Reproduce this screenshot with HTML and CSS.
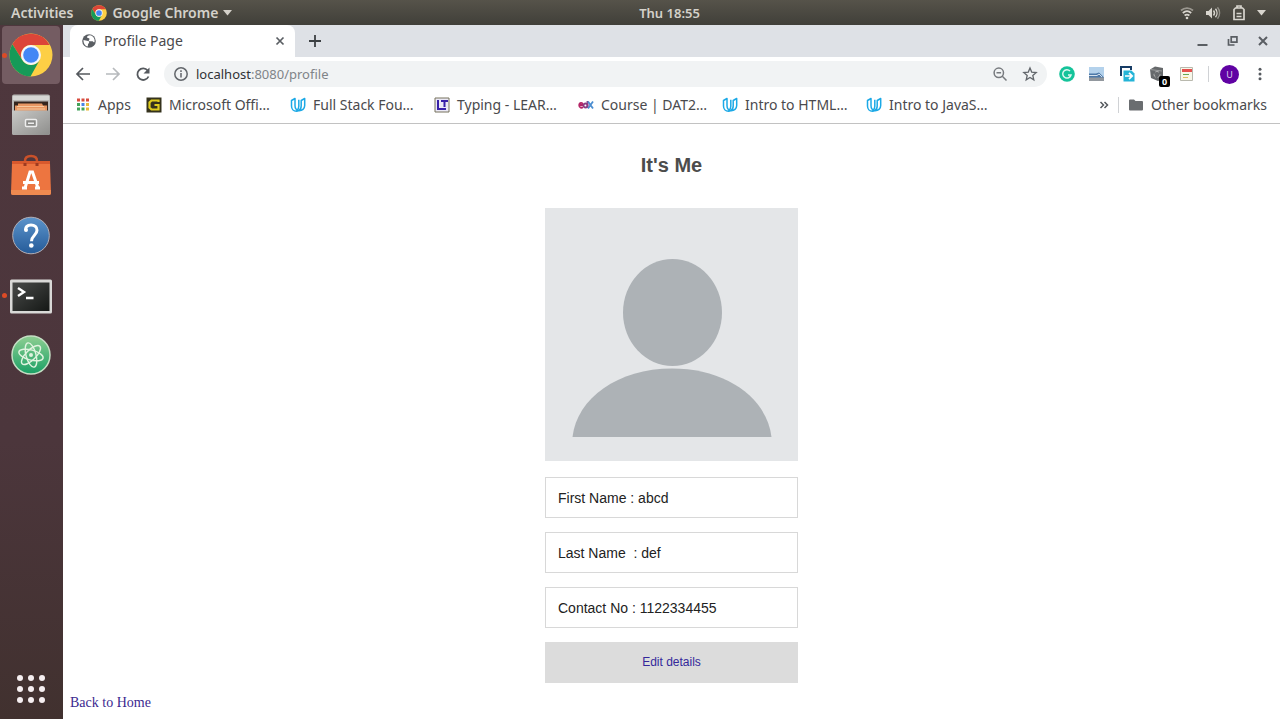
FILE: index.html
```
<!DOCTYPE html>
<html lang="en">
<head>
<meta charset="utf-8">
<meta name="viewport" content="width=device-width, initial-scale=1">
<title>Profile Page</title>
<link rel="stylesheet" href="styles.css">
</head>
<body class="desktop">
<svg class="defs" aria-hidden="true">
  <defs>
    <symbol id="chrome" viewBox="0 0 44 44">
      <circle cx="22" cy="22" r="21.5" fill="#fdcf45"/>
      <path d="M22 12h18.7A21.5 21.5 0 0 0 3.4 11.2L13.3 27A10 10 0 0 1 22 12z" fill="#dc4538"/>
      <path d="M3.4 11.2A21.5 21.5 0 0 0 21.5 43.5L30.7 27A10 10 0 0 1 13.3 27z" fill="#169a58"/>
      <circle cx="22" cy="22" r="10" fill="#f4f6fb"/>
      <circle cx="22" cy="22" r="7.8" fill="#4387f5"/>
    </symbol>
    <symbol id="udacity" viewBox="0 0 16 16">
      <path d="M5 1.5 1.500 3.500V9c0 3 2 5.300 5 5.300 1 0 1.600-.2 2.200-.6C6.500 13 5 11 5 8.400zM8.800 2.800v6.400c0 1.700-.6 3-1.800 3.900M14.700 1.500 11.200 3.500v5.600c0 2-.9 3.800-2.500 4.600 3.500.2 6-1.900 6-5.100z" fill="none" stroke="#1ca9e6" stroke-width="1.500" stroke-linejoin="round"/>
    </symbol>
  </defs>
</svg>

<header class="topbar">
  <div class="topbar-left">
    <button class="top-btn">Activities</button>
    <button class="top-btn"><svg class="i16"><use href="#chrome"/></svg>Google Chrome<svg class="caret" viewBox="0 0 9 6"><path d="M0 0h9L4.500 5.500z" fill="currentColor"/></svg></button>
  </div>
  <time class="clock">Thu 18:55</time>
  <div class="topbar-right">
    <svg class="i16" viewBox="0 0 16 16" fill="none" stroke="#d8d5ce" stroke-width="1.700"><path d="M2 5.500C5.500 2.300 10.500 2.300 14 5.500" opacity=".55"/><path d="M3.800 8c2.500-2.200 5.900-2.200 8.400 0M5.600 10.500c1.500-1.200 3.300-1.200 4.800 0"/><circle cx="8" cy="13" r="1.300" fill="#d8d5ce" stroke="none"/></svg>
    <svg class="i16" viewBox="0 0 16 16" fill="none" stroke="#d8d5ce" stroke-width="1.400"><path d="M1 6h2.500L7 2.500v11L3.500 10H1z" fill="#d8d5ce" stroke="none"/><path d="M8.500 5.500c1.200 1.500 1.200 3.500 0 5M10.500 3.800c2 2.400 2 6 0 8.400"/><path d="M12.500 2.200c2.800 3.400 2.800 8.200 0 11.600" opacity=".5"/></svg>
    <svg class="i16" viewBox="0 0 16 16" fill="none" stroke="#d8d5ce" stroke-width="1.700"><path d="M6 2.500V1h4v1.500M3 4.500 4.500 3h7L13 4.500v10H3zM5.500 8.500h5M5.500 11.500h5"/></svg>
    <svg class="caret" viewBox="0 0 9 6"><path d="M0 0h9L4.500 5.500z" fill="#d8d5ce"/></svg>
  </div>
</header>

<div class="workspace">
  <nav class="dock" aria-label="Dock">
    <button class="dock-item active running" aria-label="Google Chrome"><svg class="i44"><use href="#chrome"/></svg></button>
    <button class="dock-item" aria-label="Files"><svg class="i44" viewBox="0 0 44 44">
      <defs><linearGradient id="cab" x1="0" y1="0" x2="1" y2="1"><stop offset="0" stop-color="#c8c8c6"/><stop offset="1" stop-color="#8e8e8c"/></linearGradient></defs>
      <path d="M3 3.500Q3 1.500 5 1.500h34q2 0 2 2V40q0 2-2 2H5q-2 0-2-2z" fill="#b9b9b7"/><path d="M4 3h36v4H4z" fill="#d6d6d4"/>
      <path d="M5 8.500h34V18H5z" fill="#34251e"/><path d="M9 10.500h24l1 2h4V18H6v-5.500h3z" fill="#e79763"/><path d="M8 13.500h27M8 16h28" stroke="#f6c99f" stroke-width="1"/>
      <path d="M3 17.500h38V40q0 2-2 2H5q-2 0-2-2z" fill="url(#cab)"/><rect x="16.500" y="26.500" width="11" height="7" rx="1" fill="#8b8b89" stroke="#eee" stroke-width="1.500"/><path d="M19 29.500h6v1.500h-6z" fill="#eee"/></svg></button>
    <button class="dock-item" aria-label="Ubuntu Software"><svg class="i44" viewBox="0 0 44 44">
      <path d="M16 12V8q0-5 6-5t6 5v4" fill="none" stroke="#c9512a" stroke-width="2.500"/><path d="M3 8h38v8H3z" fill="#d8592d"/><path d="M3 11h38l1 29q0 2-2 2H4q-2 0-2-2z" fill="#ed7540"/><path d="M2 37h40v3q0 2-2 2H4q-2 0-2-2z" fill="#ee8a50"/>
      <path d="M16 13v-3M28 13v-3" stroke="#9e3b20" stroke-width="3"/><path d="m16 35 5-16h2.500L29 35M14 29.500h16M13 35h5M26 35h5" fill="none" stroke="#fff" stroke-width="3"/></svg></button>
    <button class="dock-item" aria-label="Help"><svg class="i44" viewBox="0 0 44 44"><defs><linearGradient id="help" x1="0" y1="0" x2="0" y2="1"><stop offset="0" stop-color="#5c94cb"/><stop offset="1" stop-color="#255b99"/></linearGradient></defs><circle cx="22" cy="22.500" r="18.300" fill="url(#help)" stroke="#b2aeb5"/><path d="M16.500 17c0-3 2-5 5.500-5 3.700 0 6 2.200 6 5.200 0 4.800-5.500 5.300-5.500 11" fill="none" stroke="#fff" stroke-width="3"/><circle cx="17" cy="17" r="2" fill="#fff"/><circle cx="22.300" cy="32.500" r="2.300" fill="#fff"/></svg></button>
    <button class="dock-item running" aria-label="Terminal"><svg class="i44" viewBox="0 0 44 44"><defs><linearGradient id="term" x1="0" y1="0" x2="1" y2="1"><stop offset="0" stop-color="#494b49"/><stop offset="1" stop-color="#151816"/></linearGradient></defs><rect x="1" y="6.500" width="42" height="34" rx="1.500" fill="#d9d9d7"/><rect x="3.500" y="9.500" width="37" height="28.500" fill="url(#term)"/><path d="m9 15 6 4-6 4M17 25h7.500" fill="none" stroke="#fff" stroke-width="2.400"/></svg></button>
    <button class="dock-item" aria-label="Atom"><svg class="i44" viewBox="0 0 44 44"><defs><linearGradient id="atom" x1="0" y1="0" x2="0" y2="1"><stop offset="0" stop-color="#8ecf92"/><stop offset="1" stop-color="#1aa065"/></linearGradient></defs><circle cx="22" cy="22" r="19" fill="url(#atom)" stroke="#c5dfc5" stroke-width="1.500"/><g fill="none" stroke="#e0f3df" stroke-width="1.400"><ellipse cx="22" cy="22" rx="12.500" ry="5" transform="rotate(15 22 22)"/><ellipse cx="22" cy="22" rx="12.500" ry="5" transform="rotate(75 22 22)"/><ellipse cx="22" cy="22" rx="12.500" ry="5" transform="rotate(135 22 22)"/></g><circle cx="22" cy="22" r="2" fill="#e0f3df"/></svg></button>
    <button class="dock-item all-apps" aria-label="Show Applications"><svg class="i44" viewBox="0 0 44 44" fill="#f6eff1"><circle cx="11" cy="11" r="3"/><circle cx="22" cy="11" r="3"/><circle cx="33" cy="11" r="3"/><circle cx="11" cy="22" r="3"/><circle cx="22" cy="22" r="3"/><circle cx="33" cy="22" r="3"/><circle cx="11" cy="33" r="3"/><circle cx="22" cy="33" r="3"/><circle cx="33" cy="33" r="3"/></svg></button>
  </nav>

  <section class="browser">
    <div class="tabstrip">
      <div class="tab">
        <svg class="i16" viewBox="0 0 16 16"><circle cx="8" cy="8" r="6.800" fill="#5a5e63"/><path d="M2.500 7c1.500 0 3 1 4.500 1s1.500 2 .5 2.500 0 1.500-1 3C4 13 2.300 10 2.500 7zM9 2.300c-2 0-3 1-3 2s2 .5 2.500 1.500S7 7 8 8s3-.5 4 .5 1 1 1.500.5C14.200 5.500 12 2.800 9 2.300z" fill="#fff"/></svg>
        <span class="tab-title">Profile Page</span>
        <button class="icon-btn" aria-label="Close tab"><svg class="i16" viewBox="0 0 16 16"><path d="m4.500 4.500 7 7m0-7-7 7" stroke="#5a5e63" stroke-width="1.700"/></svg></button>
      </div>
      <button class="icon-btn new-tab" aria-label="New tab"><svg class="i16" viewBox="0 0 16 16"><path d="M8 2v12M2 8h12" stroke="#3c4043" stroke-width="1.800"/></svg></button>
      <div class="window-controls">
        <button class="icon-btn" aria-label="Minimize"><svg class="i16" viewBox="0 0 16 16"><path d="M2.500 12h10" stroke="#5a5e63" stroke-width="2"/></svg></button>
        <button class="icon-btn" aria-label="Restore"><svg class="i16" viewBox="0 0 16 16" fill="none" stroke="#5a5e63" stroke-width="1.700"><path d="M6.200 3.800h5.700v5.400H6.200zM3.500 6v6h6"/></svg></button>
        <button class="icon-btn" aria-label="Close window"><svg class="i16" viewBox="0 0 16 16"><path d="m4 4 8 8m0-8-8 8" stroke="#5a5e63" stroke-width="2"/></svg></button>
      </div>
    </div>

    <div class="toolbar">
      <div class="nav-buttons">
        <button class="icon-btn" aria-label="Back"><svg class="i16" viewBox="0 0 16 16" fill="none" stroke="#55595e" stroke-width="1.700"><path d="M15 8H2.500M8 2 2 8l6 6"/></svg></button>
        <button class="icon-btn" aria-label="Forward"><svg class="i16" viewBox="0 0 16 16" fill="none" stroke="#b7babd" stroke-width="1.700"><path d="M1 8h12.500M8 2l6 6-6 6"/></svg></button>
        <button class="icon-btn" aria-label="Reload"><svg class="i16" viewBox="0 0 16 16"><path d="M13.500 10.500a5.800 5.800 0 1 1-.8-6" fill="none" stroke="#55595e" stroke-width="1.800"/><path d="M14.500 1.500v6h-6z" fill="#55595e"/></svg></button>
      </div>
      <div class="omnibox">
        <svg class="i16" viewBox="0 0 16 16" fill="none" stroke="#62666b" stroke-width="1.500"><circle cx="8" cy="8" r="6.200"/><path d="M8 7v4.500M8 4.200v1.700"/></svg>
        <div class="url" role="textbox" contenteditable="true" aria-label="Address" spellcheck="false">localhost<span class="url-path">:8080/profile</span></div>
        <button class="icon-btn" aria-label="Zoom"><svg class="i16" viewBox="0 0 16 16" fill="none" stroke="#777a7e" stroke-width="1.500"><circle cx="6.800" cy="6.800" r="4.700"/><path d="m10.300 10.300 4.200 4.200M4.500 6.800h4.600"/></svg></button>
        <button class="icon-btn" aria-label="Bookmark this page"><svg class="i16" viewBox="0 0 16 16" fill="none" stroke="#62666b" stroke-width="1.300"><path d="m8 2 1.700 4.100 4.500.4-3.400 2.900 1 4.400L8 11.500l-3.800 2.300 1-4.400-3.400-2.900 4.500-.4z"/></svg></button>
      </div>
      <div class="extensions">
        <button class="icon-btn" aria-label="Grammar checker"><svg class="i16" viewBox="0 0 16 16"><circle cx="8" cy="8" r="7.800" fill="#15c39a"/><path d="M11 5A4.200 4.200 0 1 0 12 9H9" fill="none" stroke="#dff7f0" stroke-width="1.500"/></svg></button>
        <button class="icon-btn" aria-label="Landscape extension"><svg class="i16" viewBox="0 0 16 16"><path d="M0 1h15v14H0z" fill="#b4d2ec"/><path d="M0 11h15v4H0z" fill="#92989e"/><path d="M0 7.500h7l3-1 5 5H0z" fill="#4c78a8"/><path d="M0 9.500h8l2-1.500 3 3" fill="none" stroke="#d5e2ee"/></svg></button>
        <button class="icon-btn" aria-label="Share extension"><svg class="i16" viewBox="0 0 16 16"><path d="M2 10V1h10v3" fill="none" stroke="#173c65" stroke-width="2"/><path d="M4.500 4.500h8l3 3v8h-11z" fill="#24b4d7"/><path d="M6 10h7m-3-3.200 3.200 3.200-3.200 3.200" fill="none" stroke="#fff" stroke-width="1.700"/></svg></button>
        <button class="icon-btn badge-host" aria-label="Privacy extension"><svg class="i16" viewBox="0 0 16 16"><path d="m1 3.500 5-3L14 2v11l-5 2-7-3z" fill="#66696b"/><path d="m1 3.500 12 1.500" stroke="#9a9c9d"/><circle cx="8" cy="8.500" r="3" fill="none" stroke="#b5b5b5" stroke-dasharray="4 2"/></svg><span class="badge">0</span></button>
        <button class="icon-btn" aria-label="Calendar extension"><svg class="i16" viewBox="0 0 16 16"><path d="M1.500 1.500h12v13h-12z" fill="#f8f7e9" stroke="#b9b9ae"/><path d="M3 3h10v3H3z" fill="#e5504e"/><path d="M4 8.500h6" stroke="#65a854"/><path d="M4 11.500h5" stroke="#ddbd62"/></svg></button>
      </div>
      <span class="divider"></span>
      <button class="avatar" aria-label="Account">U</button>
      <button class="icon-btn" aria-label="Menu"><svg class="i16" viewBox="0 0 16 16" fill="#55595e"><circle cx="8" cy="3.200" r="1.500"/><circle cx="8" cy="8" r="1.500"/><circle cx="8" cy="12.800" r="1.500"/></svg></button>
    </div>

    <nav class="bookmarks" aria-label="Bookmarks">
      <a class="bookmark apps" href="#"><svg class="i16" viewBox="0 0 16 16"><path d="M2 1.500h3v3H2zM6.500 1.500h3v3h-3zM11 1.500h3v3h-3z" fill="#d84c3f"/><path d="M2 6h3v3H2z" fill="#43a35a"/><path d="M6.500 6h3v3h-3z" fill="#4b84e8"/><path d="M11 6h3v3h-3z" fill="#e9b93c"/><path d="M2 10.500h3v3H2z" fill="#43a35a"/><path d="M6.500 10.500h3v3h-3z" fill="#43a35a"/><path d="M11 10.500h3v3h-3z" fill="#e9b93c"/></svg>Apps</a>
      <a class="bookmark" href="#"><svg class="i16" viewBox="0 0 16 16"><path d="M.5.5h15v15H.5z" fill="#35321d"/><path d="M12.500 5V3.500h-7l-2 2v5l2 2h7V8H8.500" fill="none" stroke="#dfcd1e" stroke-width="2.200"/></svg>Microsoft Offi…</a>
      <a class="bookmark" href="#"><svg class="i16"><use href="#udacity"/></svg>Full Stack Fou…</a>
      <a class="bookmark" href="#"><svg class="i16" viewBox="0 0 16 16"><path d="M1 1h14v14H1z" fill="#ebe9f6" stroke="#77735c"/><path d="M4 3v9h8M7 4h7M10.500 4v6" fill="none" stroke="#3820a9" stroke-width="2"/></svg>Typing - LEAR…</a>
      <a class="bookmark" href="#"><svg class="i16" viewBox="0 0 16 16" fill="none" stroke-width="1.800"><path d="M1.500 8H5c0-3-3.800-3-3.800.3 0 2.700 2.500 3 3.800 1.700" stroke="#b42667"/><circle cx="7.500" cy="8.500" r="2" stroke="#8b3e84"/><path d="M9.500 4v7" stroke="#8b3e84"/><path d="m10 4.500 5 7m0-7-5 7" stroke="#4b8ed1"/></svg>Course | DAT2…</a>
      <a class="bookmark" href="#"><svg class="i16"><use href="#udacity"/></svg>Intro to HTML…</a>
      <a class="bookmark" href="#"><svg class="i16"><use href="#udacity"/></svg>Intro to JavaS…</a>
      <div class="bookmarks-end">
        <button class="icon-btn" aria-label="More bookmarks"><svg class="i16" viewBox="0 0 16 16"><path d="m4.500 5 3 3-3 3m4-6 3 3-3 3" fill="none" stroke="#55595e" stroke-width="1.500"/></svg></button>
        <span class="divider"></span>
        <a class="bookmark other" href="#"><svg class="i16" viewBox="0 0 16 16"><path d="M1 3.500Q1 2.500 2 2.500h4L7.500 4H14q1 0 1 1v7.500q0 1-1 1H2q-1 0-1-1z" fill="#6a6d70"/></svg>Other bookmarks</a>
      </div>
    </nav>

    <main class="page">
      <h1 class="heading">It's Me</h1>
      <form class="profile">
        <svg class="portrait" viewBox="0 0 253 253" role="img" aria-label="Profile picture"><path d="M0 0h253v253H0z" fill="#e4e6e8"/><ellipse cx="127.500" cy="104.500" rx="49.500" ry="53.500" fill="#adb2b6"/><path d="M27.500 229C32 190 73 160.500 127 160.500S222 190 226.500 229z" fill="#adb2b6"/></svg>
        <input class="field" type="text" readonly aria-label="First name" value="First Name : abcd">
        <input class="field" type="text" readonly aria-label="Last name" value="Last Name  : def">
        <input class="field" type="text" readonly aria-label="Contact number" value="Contact No : 1122334455">
        <button class="edit" type="button">Edit details</button>
      </form>
      <a class="home-link" href="#">Back to Home</a>
    </main>
  </section>
</div>
</body>
</html>
```
FILE: styles.css
```
* { box-sizing: border-box; }

.desktop {
  margin: 0;
  min-height: 100vh;
  display: flex;
  flex-direction: column;
  background: #fff;
  color: #4a4a4d;
  font: 14px/20px "Noto Sans", "Open Sans", sans-serif;
}

.defs { position: absolute; width: 0; height: 0; }

button {
  border: 0;
  padding: 0;
  background: none;
  color: inherit;
  font: inherit;
}

svg { display: block; flex: none; }
.i16 { width: 16px; height: 16px; }
.i44 { width: 44px; height: 44px; }
.caret { width: 9px; height: 6px; }
.icon-btn { display: flex; flex: none; }

/* System bar */
.topbar {
  display: grid;
  grid-template-columns: 1fr auto 1fr;
  align-items: center;
  height: 25px;
  padding: 0 14px 0 11px;
  background: linear-gradient(#56534a, #403f39);
  color: #d4d1ca;
  font-size: 13px;
  font-weight: 600;
}
.topbar-left { display: flex; gap: 18px; font-size: 14px; }
.top-btn { display: flex; align-items: center; gap: 5px; }
.clock { padding-left: 62px; }
.topbar-right {
  display: flex;
  justify-content: flex-end;
  align-items: center;
  gap: 10px;
}

.workspace { flex: 1; display: flex; }

/* Dock */
.dock {
  width: 63px;
  flex: none;
  display: flex;
  flex-direction: column;
  gap: 2px;
  padding: 1px 2px;
  background: linear-gradient(#4e373d, #4c363c 60%, #41312f);
}
.dock-item {
  position: relative;
  display: grid;
  place-items: center;
  width: 58px;
  height: 58px;
  border-radius: 4px;
}
.active { background: #745c62; }
.running::before {
  content: "";
  position: absolute;
  left: 0;
  top: 27px;
  width: 5px;
  height: 5px;
  border-radius: 50%;
  background: #dd4b26;
}
.all-apps { margin-top: auto; }

/* Browser chrome */
.browser {
  flex: 1;
  min-width: 0;
  display: flex;
  flex-direction: column;
}
.tabstrip {
  display: flex;
  align-items: center;
  height: 32px;
  padding: 0 9px 0 7px;
  background: #dee1e6;
}
.tab {
  display: flex;
  align-items: center;
  gap: 7px;
  width: 225px;
  height: 32px;
  padding: 0 7px 0 11px;
  border-radius: 8px 8px 0 0;
  background: #fff;
}
.tab-title { flex: 1; }
.new-tab { margin-left: 12px; }
.window-controls { display: flex; gap: 14px; margin-left: auto; }

.toolbar {
  display: flex;
  align-items: center;
  height: 34px;
  padding: 0 12px;
}
.nav-buttons { display: flex; gap: 14px; }
.omnibox {
  flex: 1;
  display: flex;
  align-items: center;
  gap: 7px;
  height: 26px;
  margin-left: 13px;
  padding: 0 9px;
  border-radius: 13px;
  background: #f1f3f4;
}
.omnibox .icon-btn + .icon-btn { margin-left: 7px; }
.url { flex: 1; color: #303236; font-size: 13px; outline: 0; }
.url-path { color: #808488; }
.extensions { display: flex; gap: 14px; margin-left: 12px; }
.badge-host { position: relative; }
.badge {
  position: absolute;
  right: -5px;
  bottom: -5px;
  width: 11px;
  height: 11px;
  border-radius: 2px;
  background: #000;
  color: #fff;
  font-size: 9px;
  font-weight: 700;
  line-height: 11px;
  text-align: center;
}
.divider { width: 1px; height: 16px; background: #d0d2d5; }
.toolbar .divider { margin: 0 11px 0 13px; }
.avatar {
  width: 19px;
  height: 19px;
  margin-right: 13px;
  border-radius: 50%;
  background: #6002a3;
  color: #ddd0ea;
  font-size: 9px;
  line-height: 19px;
}

.bookmarks {
  display: flex;
  align-items: center;
  height: 33px;
  padding: 0 13px 5px 12px;
  border-bottom: 1px solid #c2c2c2;
}
.bookmark {
  display: flex;
  align-items: center;
  gap: 7px;
  width: 144px;
  color: inherit;
  white-space: nowrap;
  text-decoration: none;
}
.bookmark.apps { width: 71px; }
.bookmark.other { width: auto; }
.bookmarks-end { display: flex; align-items: center; gap: 6px; margin-left: auto; }
.bookmarks-end .divider { margin-right: 3px; }

/* Profile page */
.page {
  flex: 1;
  display: flex;
  flex-direction: column;
  padding: 0 7px 6px;
  font-family: "Liberation Sans", Arial, sans-serif;
}
.heading {
  margin: 29px 0 31px;
  color: #4c4c4c;
  font-size: 20px;
  line-height: 24px;
  text-align: center;
}
.profile {
  align-self: center;
  display: flex;
  flex-direction: column;
  gap: 14px;
  width: 253px;
}
.portrait { width: 100%; margin-bottom: 2px; }
.field {
  width: 100%;
  height: 41px;
  padding: 0 12px;
  border: 1px solid #d8d8d8;
  border-radius: 0;
  background: #fff;
  color: #222;
  font: 14px/20px "Liberation Sans", Arial, sans-serif;
}
.edit {
  height: 41px;
  padding-bottom: 2px;
  background: #dcdcdc;
  color: #34289b;
  font-size: 12px;
}
.home-link {
  align-self: flex-start;
  margin-top: auto;
  color: #3b2a8f;
  font: 14px/20px "Liberation Serif", "Times New Roman", serif;
  text-decoration: none;
}
```
